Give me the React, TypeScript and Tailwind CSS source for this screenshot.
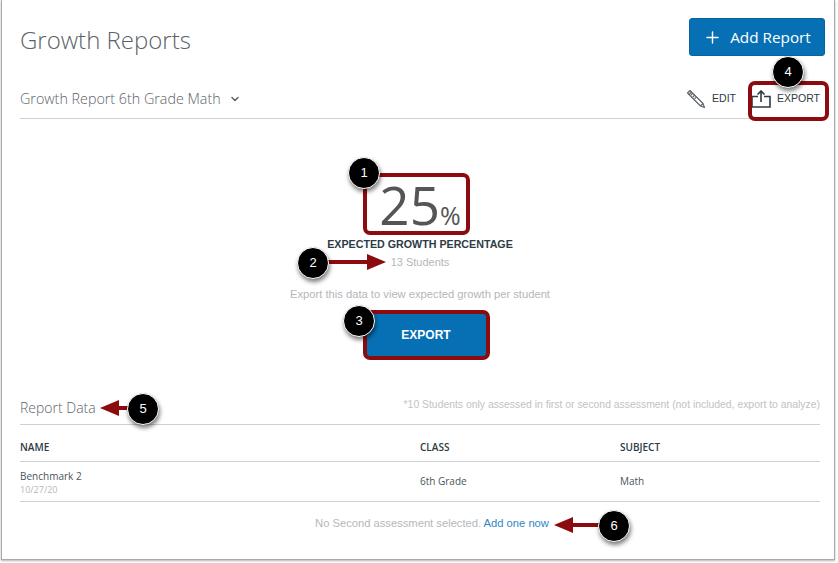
import React from 'react';
import { Plus, ChevronDown } from 'lucide-react';

/* ── Annotation overlays ── */
const BADGES = [
  { n: 1, cls: 'left-[348px] top-[157px]' },
  { n: 2, cls: 'left-[297px] top-[247px]' },
  { n: 3, cls: 'left-[343px] top-[305px]' },
  { n: 4, cls: 'left-[772px] top-[56px]' },
  { n: 5, cls: 'left-[127px] top-[393px]' },
  { n: 6, cls: 'left-[598px] top-[510px]' },
];

function Badge({ n, cls }: { n: number; cls: string }) {
  return (
    <div
      className={`absolute ${cls} w-[32px] h-[32px] rounded-full bg-black border border-white shadow-[1px_3px_4px_rgba(0,0,0,0.5)] flex items-center justify-center text-white text-[13px] font-['Liberation_Sans',sans-serif]`}
    >
      {n}
    </div>
  );
}

function Arrow({ cls, w, flip }: { cls: string; w: number; flip?: boolean }) {
  return (
    <svg
      className={`absolute ${cls} ${flip ? '-scale-x-100' : ''}`}
      width={w}
      height="18"
      viewBox={`0 0 ${w} 18`}
    >
      <rect x="0" y="7" width={w - 16} height="4" fill="#8c0b0f" />
      <polygon points={`${w - 19},1 ${w},9 ${w - 19},17`} fill="#8c0b0f" />
    </svg>
  );
}

function PencilIcon() {
  return (
    <svg width="20" height="20" viewBox="0 0 20 20" fill="none" stroke="#5a6268" strokeWidth="1.1" strokeLinejoin="round">
      <path d="M1.5 4 L4 1.5 L17 14.5 L18.5 18.5 L14.5 17 Z" />
      <path d="M3 5.5 L5.5 3 M5 6 L6.5 4.5 M6.8 8 L8.3 6.5 M8.6 9.8 L10.1 8.3 M14.5 17 L17 14.5" />
    </svg>
  );
}

function ExportIcon() {
  return (
    <svg width="20" height="18" viewBox="0 0 20 18" fill="none" stroke="#2d3b45" strokeWidth="1.6">
      <path d="M7 6.5 H1 V17 H19 V6.5 H13" />
      <path d="M10 12 V1.5 M6.5 4.5 L10 1 L13.5 4.5" />
    </svg>
  );
}

export default function App() {
  return (
    <div className="relative w-[838px] h-[563px] bg-white overflow-hidden font-['Open_Sans',sans-serif]">
      <div className="ml-[1px] w-[834px] h-[560px] bg-white border-x border-b border-[#a9a9a9] shadow-[0_1px_2px_rgba(0,0,0,0.3)] pl-[18px] pr-[9px]">
        {/* ── Header ── */}
        <div className="flex justify-between pt-[18px] h-[80px]">
          <h1 className="text-[24px] leading-[44px] font-light text-[#5b6368]">Growth Reports</h1>
          <button className="w-[136px] h-[38px] rounded-[3px] bg-[#0770b5] border border-[#0a659f] text-white text-[15.3px] flex items-center justify-center gap-2">
            <Plus size={19} strokeWidth={1.8} />
            Add Report
          </button>
        </div>

        {/* ── Report selector ── */}
        <div className="mr-[5px] h-[39px] border-b border-[#cfd2d4] flex items-center justify-between pb-[1px]">
          <div className="flex items-center gap-[8px] text-[14.3px] font-light text-[#5b6368]">
            Growth Report 6th Grade Math
            <ChevronDown size={12} strokeWidth={3} />
          </div>
          <div className="flex items-center font-['Liberation_Sans',sans-serif] text-[10.5px] text-[#2d3b45]">
            <PencilIcon />
            <span className="ml-[6px] mr-[15px]">EDIT</span>
            <ExportIcon />
            <span className="ml-[6px]">EXPORT</span>
          </div>
        </div>

        {/* ── Growth figure ── */}
        <div className="mr-[5px] flex flex-col items-center font-['Liberation_Sans',sans-serif]">
          <div className="mt-[53px] h-[66px] flex items-baseline text-[#555] font-['Open_Sans',sans-serif]">
            <span className="text-[53px] leading-[66px] font-medium">25</span>
            <span className="text-[25px]">%</span>
          </div>
          <div className="text-[10.7px] leading-[14px] font-bold text-[#2d3b45] -mt-[1px]">EXPECTED GROWTH PERCENTAGE</div>
          <div className="text-[11px] leading-[14px] text-[#b4b7ba] mt-[4px]">13 Students</div>
          <div className="text-[11.2px] leading-[14px] text-[#b4b7ba] mt-[18px]">Export this data to view expected growth per student</div>
          <button className="mt-[11px] ml-[12px] w-[123px] h-[46px] bg-[#0770b5] rounded-[3px] text-white text-[12px] font-bold">EXPORT</button>
        </div>

        {/* ── Report data ── */}
        <div className="mr-[5px] mt-[35px] h-[32px] border-b border-[#cfd2d4] flex justify-between">
          <span className="text-[14px] leading-[29px] font-light text-[#5b6368]">Report Data</span>
          <span className="font-['Liberation_Sans',sans-serif] text-[10.4px] leading-[24px] text-[#c0c3c5]">
            *10 Students only assessed in first or second assessment (not included, export to analyze)
          </span>
        </div>
        <div className="mr-[5px] grid grid-cols-[400px_200px_1fr] h-[37px] pt-[8px] items-center border-b border-[#cfd2d4] text-[10px] font-semibold text-[#2d3b45]">
          <span>NAME</span>
          <span>CLASS</span>
          <span>SUBJECT</span>
        </div>
        <div className="mr-[5px] grid grid-cols-[400px_200px_1fr] h-[40px] pb-[1px] items-center border-b border-[#cfd2d4] text-[10px] text-[#4a555c]">
          <div className="pt-[2px]">
            <div className="leading-[14px]">Benchmark 2</div>
            <div className="text-[9px] leading-[13px] text-[#b4b7ba]">10/27/20</div>
          </div>
          <span>6th Grade</span>
          <span>Math</span>
        </div>
        <div className="mr-[5px] mt-[14px] text-center font-['Liberation_Sans',sans-serif] text-[11.2px] leading-[14px] text-[#b4b7ba] pl-[24px]">
          No Second assessment selected. <a className="text-[#2f86c9]">Add one now</a>
        </div>
      </div>

      {/* ── Screenshot annotations ── */}
      <div className="absolute left-[363px] top-[173px] w-[107px] h-[62px] border-[4px] border-[#8c0b0f] rounded-[7px]" />
      <div className="absolute left-[363px] top-[310px] w-[127px] h-[50px] border-[4px] border-[#8c0b0f] rounded-[7px]" />
      <div className="absolute left-[748px] top-[81px] w-[81px] h-[40px] border-[4px] border-[#8c0b0f] rounded-[7px]" />
      <Arrow cls="left-[328px] top-[253px]" w={58} />
      <Arrow cls="left-[100px] top-[399px]" w={32} flip />
      <Arrow cls="left-[554px] top-[516px]" w={46} flip />
      {BADGES.map((b) => (
        <Badge key={b.n} n={b.n} cls={b.cls} />
      ))}
    </div>
  );
}
